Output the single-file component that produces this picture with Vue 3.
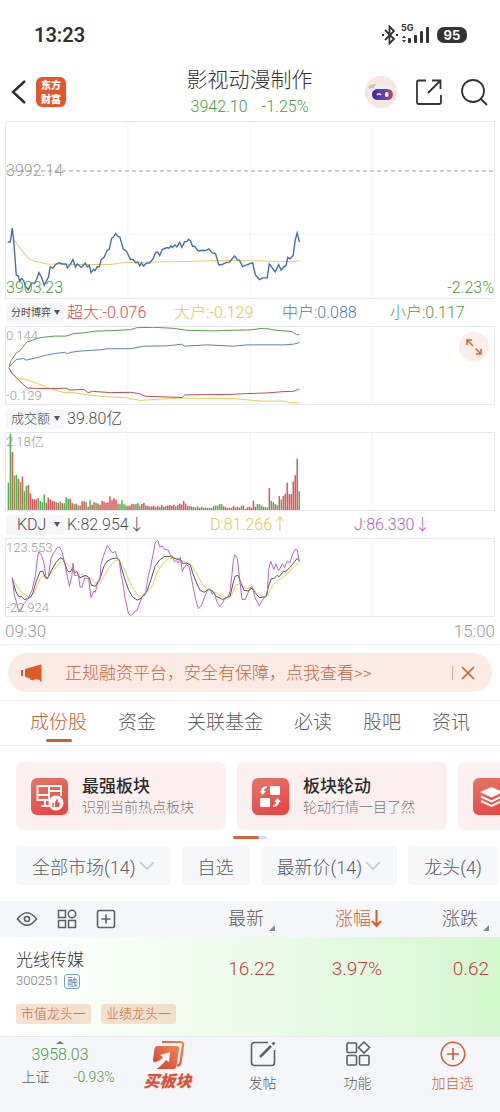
<script setup>
const gridX = [382, 750, 1118]

const priceLine = '20,367 28,367 34,325 39,372 46,468 52,470 56,486 62,478 68,484 74,502 82,512 92,492 102,492 108,478 114,460 122,474 130,498 138,482 143,474 148,442 156,446 166,434 176,430 186,434 196,434 200,446 208,436 217,420 224,443 230,434 242,444 254,431 260,443 266,438 271,460 279,450 283,454 290,442 296,442 302,420 310,414 320,392 326,390 333,356 339,352 345,341 352,350 358,352 368,388 378,396 390,420 398,420 406,430 412,428 418,440 423,430 429,440 437,432 448,430 458,418 466,398 472,398 478,408 486,390 500,384 506,386 512,378 516,384 524,376 530,382 538,368 545,383 553,366 560,366 565,359 571,364 577,380 583,380 594,394 606,392 616,393 626,388 636,400 646,402 656,436 664,436 680,429 688,428 704,409 712,422 718,422 728,442 742,436 758,430 766,466 778,481 788,476 802,476 808,433 826,458 836,436 844,452 852,442 858,440 864,414 870,418 880,408 886,362 892,340 899,367'
const averageLine = '40,362 60,390 86,419 100,425 140,434 200,435 330,435 370,429 450,428 560,426 650,423 750,424 880,427 899,423'

const flowLines = [
  { color: '#5a9a4c', points: '24,202 30,182 46,158 56,152 78,124 96,118 106,114 124,110 160,106 196,106 220,98 250,96 280,91 340,89 390,86 410,80 460,79 520,82 560,88 640,90 700,88 750,87 780,83 800,83 830,88 876,92 890,101 899,102' },
  { color: '#5b7fb5', points: '24,202 36,188 46,178 68,175 76,180 110,172 130,166 160,160 192,156 200,160 210,156 240,152 300,148 320,145 390,145 430,137 500,136 545,131 552,137 620,133 700,137 740,133 850,133 880,131 899,126' },
  { color: '#e8cb58', points: '24,204 34,222 50,236 78,240 110,252 150,268 190,280 220,280 260,287 320,293 380,296 420,304 480,300 540,297 700,298 740,302 780,306 850,306 870,310 899,312' },
  { color: '#bf4f4c', points: '24,204 32,220 50,238 66,254 80,266 150,268 196,266 206,272 250,270 262,280 276,276 330,280 390,279 420,284 434,291 490,293 546,295 554,287 640,286 680,286 740,283 800,281 850,277 880,276 899,269' }
]

const kdjLines = [
  { color: '#e6cf62', points: '34,204 50,232 66,252 86,264 100,250 116,210 128,196 140,204 156,184 174,160 190,150 204,166 220,180 240,192 258,200 272,206 286,222 298,222 312,196 326,170 342,152 356,148 370,174 390,222 410,254 424,264 440,250 456,226 472,184 488,158 506,144 524,144 544,150 560,158 572,162 590,192 606,222 622,240 640,244 660,258 680,266 694,258 706,226 718,222 736,236 756,236 770,248 790,264 804,256 820,224 840,208 860,194 880,172 899,154' },
  { color: '#555555', points: '34,206 44,244 54,262 60,260 70,270 80,268 90,262 96,250 106,214 118,184 126,184 134,204 140,206 152,180 166,156 178,142 186,144 192,158 200,182 208,186 214,176 222,188 228,184 238,204 244,200 256,196 266,204 272,226 284,230 294,212 300,200 310,168 320,152 332,146 346,142 356,148 362,170 372,204 384,240 396,262 410,272 420,268 428,258 440,244 452,208 464,168 478,148 492,138 510,138 520,142 530,146 540,146 548,160 558,158 570,164 578,190 590,222 600,242 612,248 626,238 636,244 648,260 660,266 668,270 680,264 690,260 700,216 706,198 714,196 722,218 732,242 744,244 756,236 766,250 778,264 798,262 806,230 814,206 822,206 832,196 838,200 848,186 860,182 872,170 884,154 892,144 899,152' },
  { color: '#b565c9', points: '34,202 40,256 46,276 52,302 60,304 68,284 76,276 84,262 94,240 104,194 110,140 114,122 122,134 130,160 136,204 143,200 150,146 156,130 164,120 168,112 176,108 184,124 192,160 200,200 206,230 213,200 217,158 221,196 228,196 233,194 238,232 244,232 252,204 258,206 264,206 271,264 280,244 284,248 290,222 298,210 301,162 308,138 320,104 326,112 332,124 338,126 344,122 350,140 356,150 362,196 366,212 374,268 384,314 392,320 400,310 410,302 426,260 432,258 436,246 444,196 450,172 458,132 464,96 472,88 478,108 486,106 492,116 504,118 510,134 518,138 522,154 528,150 534,158 540,140 546,184 552,170 558,164 566,168 572,196 578,228 586,268 594,298 604,288 614,260 622,242 630,238 636,254 642,248 650,276 658,292 668,280 674,266 684,262 690,246 696,190 700,150 704,132 712,144 718,200 726,270 736,270 744,250 752,232 758,232 764,262 778,290 786,274 794,264 802,254 806,180 812,152 822,178 828,160 836,182 848,160 854,172 862,152 870,158 878,132 886,116 892,118 899,154' }
]

const volumes = 'g84 g235 r178 g106 g108 r96 g86 r103 g58 g74 r77 r51 r34 r33 r33 g37 g28 g24 g48 r22 r38 r32 r28 r27 g24 r22 g26 r21 g21 g39 g34 r35 r22 g18 r20 g14 r14 r27 r27 g24 r10 g30 r16 r24 g22 r20 r16 r28 r26 r22 r24 r42 r30 r36 r32 g20 g18 g30 g18 g14 r12 r14 r19 g18 g18 r21 g12 r19 r22 g14 r13 r10 r11 r13 g9 r12 g9 r15 r10 g12 r14 r15 r13 r16 g11 r16 r20 r17 r28 r20 r12 g13 r10 g9 g8 g11 r7 g10 r7 g8 r6 g7 r6 g12 g14 g13 g18 g18 r11 r9 r6 r7 g7 r12 r8 r10 r7 g13 r14 r3 r8 r10 r7 r29 r10 g18 g18 g14 r10 g9 g8 r67 g28 g24 r18 g15 r43 g32 r43 r50 r84 r49 r49 r88 r107 r158 g58'
  .split(' ')
  .map((v, i) => ({ x: 20 + i * 6, h: Number(v.slice(1)), color: v[0] === 'g' ? '#54b04c' : '#d9575a' }))

const tabs = ['成份股', '资金', '关联基金', '必读', '股吧', '资讯']
const filters = [
  { text: '全部市场(14)', menu: true },
  { text: '自选', menu: false },
  { text: '最新价(14)', menu: true },
  { text: '龙头(4)', menu: false }
]
</script>

<template>
  <div class="page">
    <div class="status">
      <span class="clock">13:23</span>
      <span class="signals">
        <svg width="18" height="20" viewBox="0 0 18 20" fill="none" stroke="#333" stroke-width="1.8">
          <path d="M4 5l9 9-4.500 4.500V1.500L13 6l-9 9" />
          <path d="M1 10h2M15 10h2" />
        </svg>
        <span class="cell">
          <span class="net">5G</span>
          <svg width="28" height="18" viewBox="0 0 28 18" fill="#333">
            <path d="M0 12l2-2.500L4 12zM0 14l2 2.500L4 14z" />
            <rect x="6" y="12" width="3" height="5" rx="1" />
            <rect x="12" y="9" width="3" height="8" rx="1" />
            <rect x="18" y="5" width="3" height="12" rx="1" />
            <rect x="24" y="1" width="3" height="16" rx="1" />
          </svg>
        </span>
        <span class="battery">95</span>
      </span>
    </div>

    <header class="header">
      <div class="side">
        <button class="icon-btn" aria-label="返回">
          <svg width="16" height="26" viewBox="0 0 16 26" fill="none" stroke="#2b2b2b" stroke-width="2.400"><path d="M14 2L2 13l12 11" /></svg>
        </button>
        <a class="brand" href="#"><span>东方</span><span>财富</span></a>
      </div>
      <div class="title">
        <h1>影视动漫制作</h1>
        <p class="down"><span>3942.10</span><span>-1.25%</span></p>
      </div>
      <div class="side right">
        <button class="icon-btn" aria-label="智能助手">
          <svg width="34" height="34" viewBox="0 0 34 34">
            <defs>
              <linearGradient id="visor"><stop offset="0" stop-color="#3f2b8f" /><stop offset=".55" stop-color="#6a3db5" /><stop offset="1" stop-color="#c4474f" /></linearGradient>
            </defs>
            <circle cx="17" cy="17" r="16" fill="#fbe5dc" />
            <path d="M5 17c0-6 4-8 12-8 9 0 13 3 13 9s-5 9-12 9C9 27 5 24 5 17z" fill="#eef0f8" />
            <path d="M4 13c1-3 4-4 8-4l-2 4z" fill="#c3cdb9" />
            <rect x="8" y="14" width="21" height="11" rx="5.500" fill="url(#visor)" />
            <path d="M13 20q2-2.500 4 0" fill="none" stroke="#fff" stroke-width="1.500" />
            <rect x="21" y="17" width="3.500" height="5" rx="1.700" fill="#fff" />
            <circle cx="3" cy="20" r="2" fill="#e8dff2" />
          </svg>
        </button>
        <button class="icon-btn" aria-label="分享">
          <svg width="28" height="28" viewBox="0 0 28 28" fill="none" stroke="#333" stroke-width="1.800">
            <path d="M11 2.500H3.500a1.500 1.500 0 0 0-1.500 1.500v20a2 2 0 0 0 2 2h20a2 2 0 0 0 2-2v-7M13 15L25.500 2.500M17 2.500h8.500V11" />
          </svg>
        </button>
        <button class="icon-btn" aria-label="搜索">
          <svg width="28" height="28" viewBox="0 0 28 28" fill="none" stroke="#333" stroke-width="1.800">
            <circle cx="13" cy="13" r="11" /><path d="M21 21l6 6" />
          </svg>
        </button>
      </div>
    </header>

    <main>
      <section class="charts">
        <div class="plot tall">
          <svg viewBox="15 3 1470 534" preserveAspectRatio="none">
            <line v-for="x in gridX" :key="x" class="grid" :x1="x" :x2="x" y1="3" y2="537" />
            <line class="grid" x1="15" x2="1485" y1="343" y2="343" />
            <line class="dash" x1="15" x2="1485" y1="152" y2="152" />
            <polyline :points="averageLine" stroke="#ecc975" />
            <polyline class="bold" :points="priceLine" stroke="#4370a8" />
          </svg>
          <span class="mark base">3992.14</span>
          <span class="mark low down">3903.23</span>
          <span class="mark low-rate down">-2.23%</span>
        </div>

        <div class="legend four">
          <span class="lead"><button class="picker small">分时博弈<i></i></button><span class="c-red">超大:-0.076</span></span>
          <span class="c-yellow">大户:-0.129</span>
          <span class="c-blue">中户:0.088</span>
          <span class="down">小户:0.117</span>
        </div>
        <div class="plot">
          <svg viewBox="15 78 1470 237" preserveAspectRatio="none">
            <line v-for="x in gridX" :key="x" class="grid" :x1="x" :x2="x" y1="78" y2="315" />
            <polyline v-for="l in flowLines" :key="l.color" :points="l.points" :stroke="l.color" />
          </svg>
          <span class="mark sub max">0.144</span>
          <span class="mark sub min">-0.129</span>
          <button class="expand" aria-label="全屏">
            <svg width="16" height="16" viewBox="0 0 16 16" fill="none" stroke="#cf6a3a" stroke-width="1.600">
              <path d="M1 6V1h5M1 1l6 6M15 10v5h-5M15 15L9.500 9.500" />
            </svg>
          </button>
        </div>

        <div class="legend">
          <span class="lead"><button class="picker medium">成交额<i></i></button><span>39.80亿</span></span>
        </div>
        <div class="plot">
          <svg viewBox="15 81 1470 237" preserveAspectRatio="none">
            <line v-for="x in gridX" :key="x" class="grid" :x1="x" :x2="x" y1="81" y2="318" />
            <rect v-for="b in volumes" :key="b.x" :x="b.x" :y="318 - b.h" width="4.600" :height="b.h" :fill="b.color" />
          </svg>
          <span class="mark sub max">2.18亿</span>
        </div>

        <div class="legend three">
          <span class="lead"><button class="picker">KDJ<i></i></button><span>K:82.954<b>↓</b></span></span>
          <span class="c-yellow">D:81.266<b>↑</b></span>
          <span class="c-purple">J:86.330<b>↓</b></span>
        </div>
        <div class="plot">
          <svg viewBox="15 84 1470 237" preserveAspectRatio="none">
            <line v-for="x in gridX" :key="x" class="grid" :x1="x" :x2="x" y1="84" y2="321" />
            <polyline v-for="l in kdjLines" :key="l.color" :points="l.points" :stroke="l.color" />
          </svg>
          <span class="mark sub max">123.553</span>
          <span class="mark sub min">-22.924</span>
        </div>
        <div class="times"><span>09:30</span><span>15:00</span></div>
      </section>

      <div class="banner-wrap">
        <div class="banner">
          <svg width="22" height="18" viewBox="0 0 22 18" fill="#dd5a22">
            <path d="M0 6h2v6H0zM4 5l14-4h1V.500h1.500v17H19V16l-5-1c-1 2-5 1.500-5.500-1L4 13z" />
          </svg>
          <a href="#">正规融资平台，安全有保障，点我查看&gt;&gt;</a>
          <button aria-label="关闭">
            <svg width="14" height="14" viewBox="0 0 14 14" fill="none" stroke="#c9602f" stroke-width="1.600"><path d="M1 1l12 12M13 1L1 13" /></svg>
          </button>
        </div>
      </div>

      <nav class="tabs">
        <button v-for="(t, i) in tabs" :key="t" :class="{ active: i === 0 }">{{ t }}</button>
      </nav>

      <div class="cards">
        <a class="card" href="#">
          <span class="tile">
            <svg width="37" height="37" viewBox="0 0 37 37" fill="none" stroke="#fff" stroke-width="2">
              <path d="M18 22H6.500V8H30v10M6 17h13M18 8v14M19 13h10M10 28h9M14 23v4" />
              <circle cx="25" cy="25" r="6.500" fill="#fff" />
              <path d="M24 29v-4l1.500-4c1.500 0 1.500 1 1 3.500H29l-1 4.500z" fill="#e6504b" stroke="none" />
              <path d="M22 25v4" stroke="#e6504b" stroke-width="1.500" />
            </svg>
          </span>
          <span class="words"><strong>最强板块</strong><small>识别当前热点板块</small></span>
        </a>
        <a class="card" href="#">
          <span class="tile">
            <svg width="37" height="37" viewBox="0 0 37 37" fill="#fff">
              <rect x="18" y="8" width="10" height="9" rx="1" /><rect x="8" y="20" width="10" height="9" rx="1" />
              <path d="M15 8c-4 0-6 3-6 5H7.500l3 4 3.500-4h-2c0-2 1-3 3-3zM21 29c4 0 6-3 6-5h2l-3.500-4-3.500 4h2c0 2-1 3-3 3z" />
            </svg>
          </span>
          <span class="words"><strong>板块轮动</strong><small>轮动行情一目了然</small></span>
        </a>
        <a class="card" href="#" aria-label="更多">
          <span class="tile">
            <svg width="37" height="37" viewBox="0 0 37 37" fill="#fff">
              <path d="M18.500 9L30 14l-11.500 5.500L7 14z" />
              <path d="M8 18.500l10.500 5 10.500-5M8 23l10.500 5L29 23" fill="none" stroke="#fff" stroke-width="2" />
            </svg>
          </span>
        </a>
      </div>
      <div class="pager"><i></i></div>

      <div class="filters">
        <button v-for="f in filters" :key="f.text">
          {{ f.text }}
          <svg v-if="f.menu" width="16" height="10" viewBox="0 0 16 10" fill="none" stroke="#c4c6cb" stroke-width="1.600"><path d="M1 1l7 7 7-7" /></svg>
        </button>
      </div>

      <table class="stocks">
        <thead>
          <tr>
            <th>
              <div class="tools">
                <button aria-label="显示">
                  <svg width="22" height="20" viewBox="0 0 22 20" fill="none" stroke="#5e6064" stroke-width="1.600"><path d="M1.500 10Q11-2.500 20.500 10 11 22.500 1.500 10z" /><circle cx="11" cy="10" r="2.500" /></svg>
                </button>
                <button aria-label="布局">
                  <svg width="20" height="20" viewBox="0 0 20 20" fill="none" stroke="#5e6064" stroke-width="1.500"><rect x="1.500" y="1.500" width="7" height="7" /><circle cx="15" cy="5" r="3.700" /><rect x="1.500" y="11.500" width="7" height="7" /><rect x="11.500" y="11.500" width="7" height="7" /></svg>
                </button>
                <button aria-label="添加">
                  <svg width="20" height="20" viewBox="0 0 20 20" fill="none" stroke="#5e6064" stroke-width="1.600"><rect x="1.500" y="1.500" width="17" height="17" rx="2" /><path d="M5.500 10h9M10 5.500v9" /></svg>
                </button>
              </div>
            </th>
            <th><button class="sort">最新<i></i></button></th>
            <th><button class="sort on">涨幅<svg width="11" height="18" viewBox="0 0 11 18" fill="none" stroke="#cf6030" stroke-width="2"><path d="M5.500 0v16M1 11l4.500 5L10 11" /></svg></button></th>
            <th><button class="sort">涨跌<i></i></button></th>
          </tr>
        </thead>
        <tbody>
          <tr>
            <td>
              <div class="name">光线传媒</div>
              <div class="code">300251<em>融</em></div>
              <div class="tags"><span>市值龙头一</span><span>业绩龙头一</span></div>
            </td>
            <td>16.22</td>
            <td>3.97%</td>
            <td>0.62</td>
          </tr>
        </tbody>
      </table>
    </main>

    <footer class="dock">
      <button class="index">
        <i></i>
        <span class="down">3958.03</span>
        <span class="pair"><span>上证</span><span class="down">-0.93%</span></span>
      </button>
      <button class="buy">
        <svg width="32" height="29" viewBox="0 0 32 29">
          <defs><linearGradient id="hot" x1="0" x2="1" y1="1" y2="0"><stop offset="0" stop-color="#d93a30" /><stop offset="1" stop-color="#f0874f" /></linearGradient></defs>
          <path d="M10 1h18q3.500 0 3 3.500l-2.500 17q-.500 3-3.500 3" fill="none" stroke="url(#hot)" stroke-width="2.200" />
          <path d="M5 5h19q3.500 0 3 3l-2.500 17q-.500 3-3 3H4L1 19 2.500 7.500Q3 5 5 5z" fill="url(#hot)" />
          <path d="M0 22Q7 20.500 11 16.500L8 14l10-3-1 10-3-2Q10 25 4 28.500L0 29z" fill="#f5f6fa" />
        </svg>
        <span>买板块</span>
      </button>
      <button>
        <svg width="26" height="26" viewBox="0 0 26 26" fill="none" stroke="#5e6064" stroke-width="1.600"><path d="M18 1.500H4.500a3 3 0 0 0-3 3v17a3 3 0 0 0 3 3h17a3 3 0 0 0 3-3V9" /><path d="M10 16L21 5" stroke-width="2.500" /><path d="M22.500 3.500l2-2" stroke-width="2.500" /></svg>
        <span>发帖</span>
      </button>
      <button>
        <svg width="26" height="26" viewBox="0 0 26 26" fill="none" stroke="#5e6064" stroke-width="1.600"><rect x="2" y="2" width="9.500" height="9.500" rx="1" /><path d="M19 1l5.500 5.500L19 12l-5.500-5.500z" /><rect x="2" y="14.500" width="9.500" height="9.500" rx="1" /><rect x="14.500" y="14.500" width="9.500" height="9.500" rx="1" /></svg>
        <span>功能</span>
      </button>
      <button class="add">
        <svg width="26" height="26" viewBox="0 0 26 26" fill="none" stroke="#cf6030" stroke-width="1.600"><circle cx="13" cy="13" r="11.700" /><path d="M7 13h12M13 7v12" /></svg>
        <span>加自选</span>
      </button>
    </footer>
  </div>
</template>

<style>
body { background: #fff; }
</style>

<style scoped>
.page {
  font-family: "Roboto", "Noto Sans CJK SC", sans-serif;
  font-weight: 300;
  color: #4a4a4a;
  overflow: hidden;
}
.page * { box-sizing: border-box; }
button { font: inherit; color: inherit; background: none; border: 0; padding: 0; margin: 0; white-space: nowrap; }
a { color: inherit; text-decoration: none; }
svg { display: block; flex: none; }
.down { color: #4d9a45; }
.c-red { color: #c6504e; }
.c-yellow { color: #dfc453; }
.c-blue { color: #5478a8; }
.c-purple { color: #b05cc4; }

.status { display: flex; justify-content: space-between; align-items: center; height: 62px; padding: 8px 33px 0 34px; }
.clock { font: 600 20px/24px "Roboto", sans-serif; color: #303030; }
.signals { display: flex; align-items: center; gap: 3px; }
.cell { position: relative; padding-right: 4px; }
.net { position: absolute; left: -1px; top: -3px; font: 700 9px/10px "Inter", sans-serif; color: #333; }
.battery { width: 30px; border-radius: 7px; background: #333; color: #fff; text-align: center; font: 700 13px/16px "Inter", sans-serif; }

.header { display: flex; align-items: center; justify-content: space-between; height: 59px; padding: 0 12px 0 11px; }
.side { display: flex; align-items: center; gap: 9px; flex: 1; }
.side.right { justify-content: flex-end; gap: 17px; }
.brand { display: flex; flex-direction: column; align-items: center; justify-content: center; width: 30px; height: 30px; border-radius: 6px; background: #e5562b; color: #fff; font: 900 10px/14px "Noto Sans CJK SC", sans-serif; }
.title { text-align: center; }
.title h1 { margin: 0; font-size: 21px; line-height: 30px; font-weight: 300; color: #333; }
.title p { display: flex; justify-content: center; gap: 14px; margin: 0; font-size: 16px; line-height: 24px; }

.charts { padding: 0 5px; border-bottom: 1px solid #eeeef2; }
.plot { position: relative; height: 79px; border: 1px solid #e8e8ec; }
.plot.tall { height: 178px; }
.plot > svg { width: 100%; height: 100%; }
.plot line, .plot polyline { fill: none; stroke-width: 1; vector-effect: non-scaling-stroke; }
.plot .bold { stroke-width: 1.4px; }
.plot .grid { stroke: #f3f3f5; }
.plot .dash { stroke: #999; stroke-dasharray: 4 3; }
.mark { position: absolute; left: 0; font-size: 16px; line-height: 20px; color: #999; }
.mark.down { color: #4d9a45; }
.base { top: 39px; }
.low { bottom: 0; }
.low-rate { bottom: 0; left: auto; right: 0; }
.sub { font-size: 13px; line-height: 16px; }
.sub.max { top: 1px; }
.sub.min { bottom: 0; }
.expand { position: absolute; right: 5px; top: 5px; width: 30px; height: 30px; border-radius: 50%; background: #fbeee8; display: grid; place-items: center; }

.legend { display: grid; align-items: center; height: 27px; font-size: 16px; line-height: 24px; white-space: nowrap; }
.legend.four { grid-template-columns: 169fr 108fr 108fr 105fr; }
.legend.three { grid-template-columns: 205fr 144fr 141fr; }
.legend b { font: 300 16px/20px "Noto Sans CJK SC", sans-serif; }
.lead { display: flex; align-items: center; gap: 3px; }
.picker { display: flex; align-items: center; justify-content: space-between; width: 58px; height: 20px; padding: 0 4px 0 11px; margin-left: 1px; background: #f5f6f9; border-radius: 3px; }
.picker.small { font-size: 10px; padding-left: 5px; font-weight: 400; }
.picker.medium { font-size: 13px; padding-left: 5px; }
.picker i { border: 3px solid transparent; border-top: 5px solid #555; border-bottom: 0; }
.times { display: flex; justify-content: space-between; padding-top: 2px; font-size: 17px; line-height: 25px; color: #999; }

.banner-wrap { padding: 8px; border-bottom: 1px solid #eeeef2; }
.banner { display: flex; align-items: center; height: 39px; padding: 0 17px 0 13px; border-radius: 20px; background: #fbebe4; color: #c4673d; }
.banner a { flex: 1; margin-left: 22px; font-size: 17px; line-height: 24px; white-space: nowrap; }
.banner button { padding-left: 8px; border-left: 1px solid #dfa98f; }

.tabs { display: flex; justify-content: space-between; height: 45px; padding: 0 30px; border-bottom: 1px solid #eeeef2; }
.tabs button { position: relative; font-size: 19px; line-height: 44px; color: #5a5c60; }
.tabs .active { color: #c9602f; }
.tabs .active::after { content: ""; position: absolute; left: 50%; bottom: 3px; width: 26px; height: 3px; margin-left: -13px; border-radius: 2px; background: #c9602f; }

.cards { display: flex; gap: 11px; padding: 16px 0 0 16px; }
.card { display: flex; flex: none; align-items: center; gap: 14px; width: 210px; height: 68px; padding-left: 15px; border-radius: 7px; background: #fbf0ef; }
.tile { width: 37px; height: 37px; border-radius: 6px; background: linear-gradient(160deg, #e47868, #e9403f); }
.words { display: flex; flex-direction: column; }
.words strong { font-size: 17px; line-height: 22px; font-weight: 500; color: #2c2c2c; }
.words small { font-size: 14px; line-height: 20px; color: #77787c; }
.pager { width: 34px; height: 3px; margin: 6px auto 7px; border-radius: 2px; background: #cfdcf5; }
.pager i { display: block; width: 26px; height: 3px; border-radius: 2px; background: #d4673d; }

.filters { display: flex; gap: 11px; padding: 0 0 16px 16px; }
.filters button { display: flex; align-items: center; gap: 3px; flex: none; height: 39px; padding: 0 16px; border-radius: 4px; background: #f6f7f9; color: #5a5c60; font-size: 18px; }

.stocks { width: 100%; table-layout: fixed; border-collapse: collapse; }
.stocks th { height: 36px; padding: 0; width: 21.4%; background: #f5f6fa; font-weight: 300; text-align: right; }
.stocks th:first-child { width: 33.6%; padding-left: 16px; }
.stocks th:last-child { width: 23.6%; padding-right: 11px; }
.tools { display: flex; gap: 19px; }
.sort { display: inline-flex; align-items: center; font-size: 18px; line-height: 24px; color: #5a5c60; }
.sort i { align-self: flex-end; margin-left: 5px; border-left: 6px solid transparent; border-bottom: 6px solid #888; }
.sort.on { color: #cf6030; }
.stocks tbody tr { background: linear-gradient(90deg, #fff 0%, #f1fcef 40%, #d4f8cf 100%); }
.stocks td { padding: 18px 0 0; vertical-align: top; text-align: right; font-size: 19px; line-height: 28px; color: #c0403f; }
.stocks td:first-child { padding: 11px 0 12px 16px; text-align: left; white-space: nowrap; }
.stocks td:last-child { padding-right: 11px; }
.stocks .name { font-size: 17px; line-height: 24px; color: #333; }
.stocks .code { display: flex; align-items: center; gap: 5px; font-size: 13px; line-height: 18px; color: #77787c; }
.code em { padding: 0 2px; border: 1px solid #7ba0c9; border-radius: 3px; font: 400 10px/13px "Noto Sans CJK SC", sans-serif; color: #4d7fb5; }
.tags { display: flex; gap: 10px; margin-top: 14px; }
.tags span { padding: 0 5px; border-radius: 3px; background: rgba(238, 180, 142, .4); color: #c4673d; font-size: 13px; line-height: 20px; }

.dock { display: grid; grid-template-columns: 120fr 95fr 95fr 95fr 95fr; height: 76px; background: #f5f6fa; border-top: 1px solid #e9eaee; }
.dock button { display: flex; flex-direction: column; align-items: center; gap: 6px; padding-top: 4px; font-size: 14px; line-height: 20px; color: #5a5c60; }
.dock .add { color: #cf6030; }
.dock .buy { gap: 2px; }
.buy span { font-size: 16px; font-weight: 900; font-style: italic; color: #dd5038; }
.dock .index { gap: 0; padding: 4px 0 0; }
.index i { border: 4px solid transparent; border-bottom: 3px solid #777; border-top: 0; }
.index > span { line-height: 22px; font-size: 16px; }
.index > .pair { display: flex; gap: 24px; margin-left: 16px; font-size: 14px; }
</style>
